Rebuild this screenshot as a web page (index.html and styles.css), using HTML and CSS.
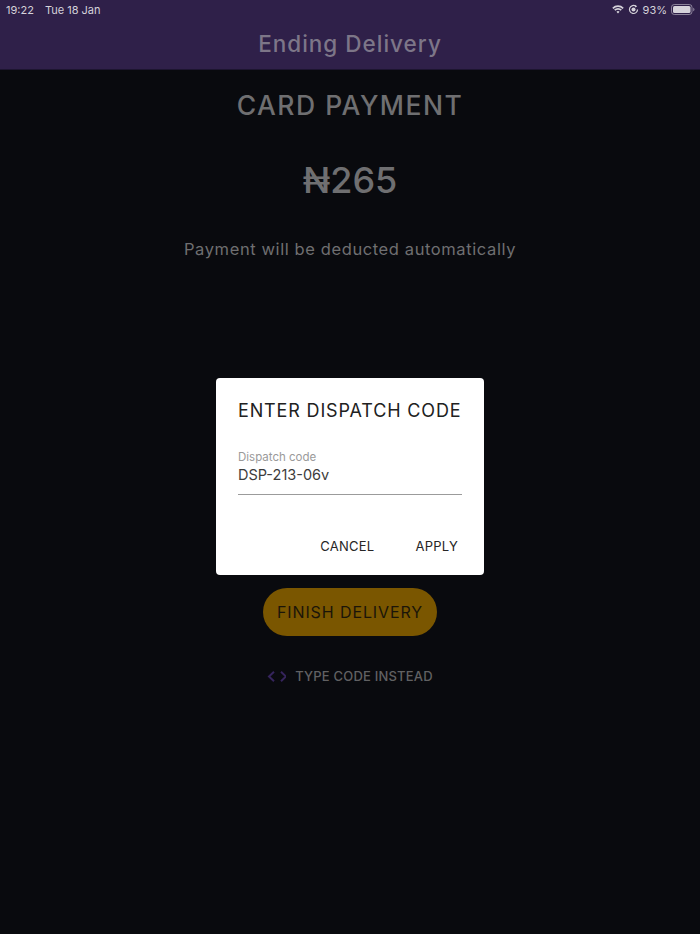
FILE: index.html
```html
<!DOCTYPE html>
<html lang="en">
<head>
<meta charset="utf-8">
<title>Ending Delivery</title>
<link rel="stylesheet" href="styles.css">
</head>
<body>
<div class="app">
  <header class="appbar">
    <div class="status">
      <div class="status-left"><span>19:22</span><span>Tue 18 Jan</span></div>
      <div class="status-right">
        <svg class="wifi" viewBox="0 0 14 10" width="12" height="9"><path d="M1 3.600a8.500 8.500 0 0 1 12 0" fill="none" stroke="currentColor" stroke-width="2"/><path d="M3.200 5.800a5.300 5.300 0 0 1 7.600 0" fill="none" stroke="currentColor" stroke-width="2"/><path d="M5.200 7.700 7 9.600l1.800-1.900a2.600 2.600 0 0 0-3.600 0z" fill="currentColor"/></svg>
        <svg class="lock" viewBox="0 0 12 12" width="11" height="11"><path d="M10.400 6A4.400 4.400 0 1 1 8.600 2.400" fill="none" stroke="currentColor" stroke-width="1.300"/><path d="M8 .8l2 1.800-2.400 1.100z" fill="currentColor"/><circle cx="6" cy="6" r="2.200" fill="currentColor"/></svg>
        <span>93%</span>
        <svg class="battery" viewBox="0 0 24 11" width="24" height="11"><rect x=".5" y=".5" width="20.500" height="10" rx="2.800" fill="none" stroke="currentColor" stroke-opacity=".55"/><rect x="2" y="2" width="17.500" height="7" rx="1.500" fill="currentColor"/><path d="M22.200 3.800c.8.3 1.300 1 1.300 1.700s-.5 1.400-1.300 1.700z" fill="currentColor" fill-opacity=".55"/></svg>
      </div>
    </div>
    <h1 class="title">Ending Delivery</h1>
  </header>
  <main class="content">
    <h2 class="heading">CARD PAYMENT</h2>
    <p class="amount">₦265</p>
    <p class="note">Payment will be deducted automatically</p>
    <button class="finish" type="button">FINISH DELIVERY</button>
    <div class="type-code">
      <svg viewBox="0 0 19 11" width="19" height="11"><path d="M7 .8 2 5.500 7 10.200M14 .8l5 4.700-5 4.700" fill="none" stroke="#35245c" stroke-width="2"/></svg>
      <span>TYPE CODE INSTEAD</span>
    </div>
  </main>
  <div class="dialog" role="dialog">
    <h3 class="dialog-title">ENTER DISPATCH CODE</h3>
    <div class="field">
      <label class="field-label">Dispatch code</label>
      <div class="field-value">DSP-213-06v</div>
    </div>
    <div class="actions"><span>CANCEL</span><span>APPLY</span></div>
  </div>
</div>
</body>
</html>
```

FILE: styles.css
```css
* { box-sizing: border-box; }
html, body { margin: 0; height: 100%; }
body { background: #090a0e; font-family: "Inter", "Open Sans", sans-serif; }
.app { position: relative; width: 700px; height: 934px; overflow: hidden; display: flex; flex-direction: column; }
.appbar { height: 70px; background: #2f2049; display: flex; flex-direction: column; align-items: center; border-bottom: 1px solid #1d1530; }
.status { width: 100%; height: 18px; padding: 1px 5px 0 6px; display: flex; justify-content: space-between; align-items: center; color: #d5d2da; font-family: "Inter", sans-serif; font-size: 11px; }
.status-left { display: flex; gap: 11px; }
.status-right { display: flex; align-items: center; gap: 4px; font-size: 11px; }
.title { margin: 12px 0 0; font-size: 22.5px; font-weight: 500; color: #7d7688; line-height: 28px; letter-spacing: 1px; }
.content { display: flex; flex-direction: column; align-items: center; color: #6f6f71; }
.heading { margin: 19px 0 0; font-size: 26.5px; line-height: 32px; font-weight: 500; letter-spacing: 1.5px; }
.amount { margin: 37px 0 0; font-size: 36px; line-height: 44px; font-weight: 500; }
.note { margin: 35px 0 0; font-size: 16.5px; line-height: 24px; font-weight: 400; letter-spacing: .6px; }
.finish { margin-top: 327px; width: 174px; height: 48px; border: 0; border-radius: 24px; background: #7a5600; color: #1b1509; font: 400 16px/20px "Inter", sans-serif; letter-spacing: .9px; }
.type-code { margin-top: 30px; height: 20px; display: flex; align-items: center; gap: 9px; font-size: 13px; font-weight: 500; color: #616163; letter-spacing: .2px; }
.dialog { position: absolute; left: 216px; top: 378px; width: 268px; height: 197px; background: #fff; border-radius: 4px; padding: 22px 22px 20px; color: #212121; display: flex; flex-direction: column; }
.dialog-title { margin: 0; font-size: 18px; line-height: 22px; font-weight: 400; letter-spacing: .85px; white-space: nowrap; }
.field { flex: none; width: 224px; height: 58px; display: flex; flex-direction: column; margin-top: 15px; padding-top: 13px; border-bottom: 1px solid #9b9b9b; }
.field-label { font-size: 11.5px; line-height: 14px; color: #9a9a9a; }
.field-value { font-size: 14.5px; line-height: 20px; color: #3c3c3c; letter-spacing: 0; margin-top: 1px; }
.actions { margin: 42px 4px 0 0; display: flex; justify-content: flex-end; gap: 41px; font-size: 13px; line-height: 18px; color: #262626; letter-spacing: .25px; }
```
